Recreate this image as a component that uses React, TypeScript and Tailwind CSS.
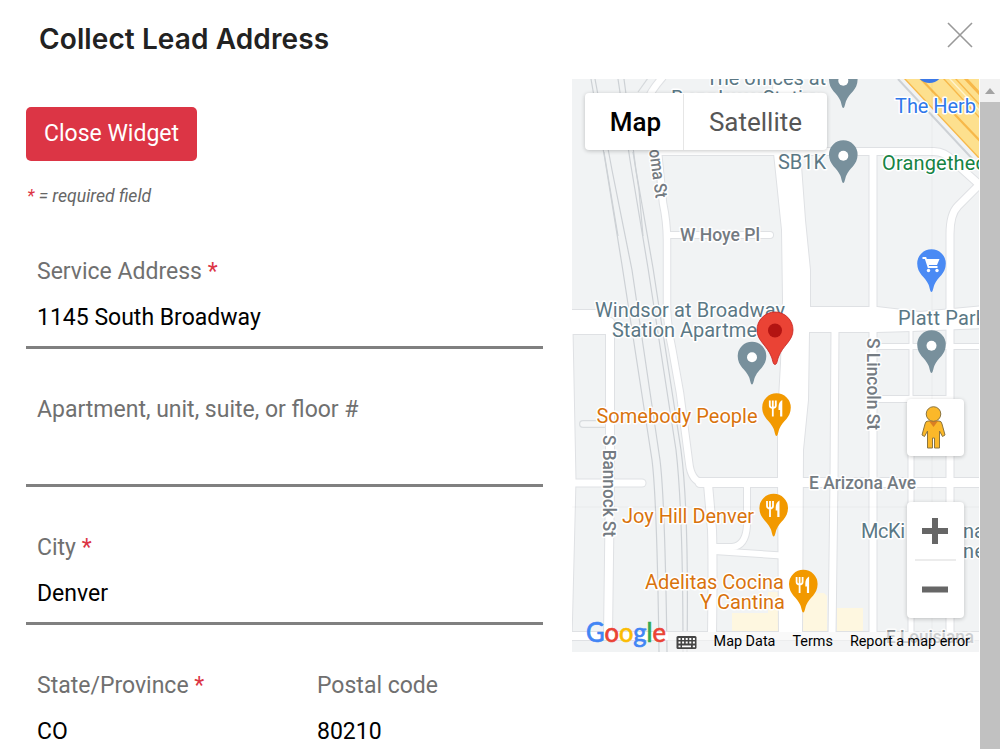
import type { ReactNode } from 'react'

type FieldProps = {
  label: string
  value: string
  required?: boolean
}

type Point = { x: number; y: number }

type PoiLabelProps = Point & {
  children: string
  color: string
  width: number
}

const GRAY = '#78909c'
const ORANGE = '#f29900'
const GRAY_TEXT = '#5b7885'
const ORANGE_TEXT = '#d9730d'

const roads: Array<{ d: string; width: number }> = [
  { d: 'M667 70 L662 78 Q650 92 648 100 L658 152 L663 203 Q667 222 667 240 V310 Q668 330 672 348 L680 393 L689 462 Q691 482 704 483', width: 6.5 },
  { d: 'M658 151.5 H934 Q945 152 952 160 L982 187', width: 7 },
  { d: 'M979 185 L958 206 Q950 214 950 234 V640', width: 7 },
  { d: 'M667 235 H770', width: 6 },
  { d: 'M566 322 H608', width: 24 },
  { d: 'M610 322 V480 L608 636', width: 8 },
  { d: 'M566 483 H642', width: 7 },
  { d: 'M700 482.5 H985', width: 9 },
  { d: 'M566 636 H985', width: 8 },
  { d: 'M708 484 L712 530 Q713 560 712 636', width: 8 },
  { d: 'M747 484 V525 Q746 546 732 547 L714 547', width: 6 },
  { d: 'M714 551 L782 555.5', width: 6 },
  { d: 'M873 153 V636', width: 7 },
  { d: 'M835 328 L834 480 L832 636', width: 7 },
  { d: 'M911 328 V398', width: 3 },
  { d: 'M911 398 V636', width: 5 },
  { d: 'M873 346.5 H985', width: 5 },
  { d: 'M873 399 H950', width: 6 },
  { d: 'M569 330 L572 480 L568 640', width: 7 },
]

const broadway =
  'M773 70 L774 153 L782 230 L783 300 L781 363 L778 417 V477 L779 636 H802 L803 450 L808 400 L809 332 H877 L912 331 L985 328 V306 L920 312 L877 307 H810 V270 L805 220 L800 152 V70 Z'

const rails = [
  'M591 79 L605 160 L622 265 L652 460 Q657 500 659 652',
  'M595 79 L612 170 L632 270 L660 460 Q665 500 667 652',
  'M618 79 L630 160 L648 268 L676 450 Q683 510 683 652',
  'M624 79 L636 170 L653 268 L681 450 Q689 510 687 652',
  'M604 152 L612 200 L618 236',
  'M633 152 L639 190 L643 236',
]

const googleLetters = [
  { letter: 'G', color: '#4285f4' },
  { letter: 'o', color: '#ea4335' },
  { letter: 'o', color: '#fbbc04' },
  { letter: 'g', color: '#4285f4' },
  { letter: 'l', color: '#34a853' },
  { letter: 'e', color: '#ea4335' },
]

const userFields = {
  address: '1145 South Broadway',
  unit: '',
  city: 'Denver',
  state: 'CO',
  postalCode: '80210',
}

export default function App() {
  return (
    <main className="flex h-[749px] w-[1000px] flex-col overflow-hidden bg-white font-['Roboto',sans-serif]">
      <header className="flex h-[79px] shrink-0 items-start justify-between pt-[22px] pr-[26px] pl-[39px]">
        <h1 className="pt-px font-['Inter',sans-serif] text-[28px] leading-8 font-semibold tracking-[0.1px] text-[#222]">
          Collect Lead Address
        </h1>
        <button type="button" aria-label="Close">
          <svg width="28" height="28" viewBox="0 0 28 28" stroke="#999" strokeWidth="1.6">
            <path d="M2 1 L26 25 M26 1 L2 25" />
          </svg>
        </button>
      </header>

      <div className="flex min-h-0 flex-1">
        <LeadForm />
        <LeadMap />
        <Scrollbar />
      </div>
    </main>
  )
}

function LeadForm() {
  return (
    <form className="w-[572px] shrink-0 pt-7 pr-[29px] pl-[26px]">
      <button
        type="button"
        className="flex h-[54px] w-[171px] items-center justify-center rounded-[5px] bg-[#dc3545] pt-px text-[23px] text-white"
      >
        Close Widget
      </button>
      <p className="mt-[23px] pl-px text-[17.6px] leading-6 text-[#666] italic">
        <span className="text-[#dc3545]">*</span> = required field
      </p>
      <div className="mt-[50px] grid gap-[47px]">
        <Field label="Service Address" value={userFields.address} required />
        <Field label="Apartment, unit, suite, or floor #" value={userFields.unit} />
        <Field label="City" value={userFields.city} required />
        <div className="grid grid-cols-[251px_237px] gap-[29px]">
          <Field label="State/Province" value={userFields.state} required />
          <Field label="Postal code" value={userFields.postalCode} />
        </div>
      </div>
    </form>
  )
}

function Field({ label, value, required }: FieldProps) {
  return (
    <label className="flex h-[91px] flex-col border-b-3 border-[#808080] px-[11px]">
      <span className="text-[23px] leading-7 text-[#707070]">
        {label} {required && <span className="text-[#dc3545]">*</span>}
      </span>
      <input
        className="mt-4 h-8 w-full bg-transparent text-[23px] text-black outline-none"
        defaultValue={value}
      />
    </label>
  )
}

function LeadMap() {
  return (
    <section className="relative h-[573px] w-[407px] shrink-0 overflow-hidden bg-[#f1f3f4]">
      <MapCanvas />
      <div className="absolute top-[14px] left-[13px] flex h-[57px] w-[242px] rounded-sm bg-white pt-px text-[26px] shadow-[0_1px_4px_rgba(0,0,0,0.22)]">
        <button type="button" className="w-[99px] border-r border-[#e6e6e6] pl-[3px] font-medium text-black">
          Map
        </button>
        <button type="button" className="flex-1 text-[#565656]">
          Satellite
        </button>
      </div>

      <MapControl className="top-[320px] h-[57px]">
        <Pegman />
      </MapControl>
      <MapControl className="top-[423px] h-[116px]">
        <svg width="57" height="116" viewBox="0 0 57 116">
          <path d="M15 29 H41 M28 16 V42 M15 87.500 H41" stroke="#666" strokeWidth="6" />
          <path d="M8 58 H49" stroke="#e6e6e6" strokeWidth="1.5" />
        </svg>
      </MapControl>

      <div className="absolute right-0 bottom-0 flex h-5 items-center gap-[17px] bg-[#f5f5f5]/60 pr-[9px] pl-2 text-[14.4px] leading-5 whitespace-nowrap text-black">
        <span className="flex items-center gap-[17px]">
          <KeyboardIcon />
          <span>Map Data</span>
        </span>
        <span>Terms</span>
        <span>Report a map error</span>
      </div>
    </section>
  )
}

function MapControl({ className, children }: { className: string; children: ReactNode }) {
  return (
    <button
      type="button"
      className={`absolute left-[334.5px] flex w-[57px] items-center justify-center rounded-sm bg-white shadow-[0_1px_4px_rgba(0,0,0,0.22)] ${className}`}
    >
      {children}
    </button>
  )
}

function MapCanvas() {
  return (
    <svg width="407" height="573" viewBox="572 79 407 573" fill="none">
      <g fill="#fef7e0">
        <path d="M732 613 H768 V592 H779 V633 H732 Z" />
        <path d="M802 593 H824 L827 596 V632 H802 Z" />
        <path d="M837 608 H863 V632 H837 Z" />
      </g>

      <g stroke="#cdd1d5" strokeWidth="1.2">
        {rails.map((d) => (
          <path key={d} d={d} />
        ))}
      </g>
      <path d="M638 92 L648 78" stroke="#d5d8db" strokeWidth="1.2" />
      <path d="M583 424 H606" stroke="#d9dcdf" strokeWidth="8" strokeLinecap="round" />
      <path d="M583 424 H606" stroke="#f5f6f7" strokeWidth="5.500" strokeLinecap="round" />

      {/* casings first so that the crossings stay open */}
      <g stroke="#dfe1e4" strokeLinecap="round">
        {roads.map((road) => (
          <path key={road.d} d={road.d} strokeWidth={road.width + 2} strokeLinecap={road.width > 20 ? 'butt' : 'round'} />
        ))}
        <path d={broadway} strokeWidth="2" />
      </g>
      <g stroke="#fff" strokeLinecap="round">
        {roads.map((road) => (
          <path key={road.d} d={road.d} strokeWidth={road.width} strokeLinecap={road.width > 20 ? 'butt' : 'round'} />
        ))}
        <path d={broadway} fill="#fff" stroke="none" />
      </g>

      <path d="M898 79 L979 166" stroke="#cdd1d5" strokeWidth="2" />
      <path d="M904 78 L980 159 V78 Z" fill="#fde08e" />
      <g stroke="#f7b84a" strokeWidth="1.4">
        <path d="M904 78 L980 159" />
        <path d="M920 78 L980 141" strokeWidth="2.200" />
        <path d="M943 78 L980 118" />
        <path d="M949 78 L980 111" stroke="#fff3cf" />
        <path d="M955 78 L980 105" />
        <path d="M965 78 L980 94" strokeWidth="3" />
      </g>

      <path d="M932 79 V632 M572 507 H979" stroke="#000" strokeOpacity="0.03" />

      <StreetLabel x={680} y={241} width={80}>W Hoye Pl</StreetLabel>
      <StreetLabel x={809} y={488.500} width={107}>E Arizona Ave</StreetLabel>
      <g transform="translate(649 150) rotate(82)">
        <StreetLabel x={0} y={0} width={49}>oma St</StreetLabel>
      </g>
      <g transform="translate(867 338) rotate(90)">
        <StreetLabel x={0} y={0} width={92}>S Lincoln St</StreetLabel>
      </g>
      <g transform="translate(603 435) rotate(90)">
        <StreetLabel x={0} y={0} width={102}>S Bannock St</StreetLabel>
      </g>
      <g opacity="0.8">
        <StreetLabel x={886} y={642.500} width={88}>E Louisiana</StreetLabel>
      </g>

      <PoiLabel x={706} y={84.500} width={120} color={GRAY_TEXT}>The offices at</PoiLabel>
      <PoiLabel x={671} y={104.500} width={154} color={GRAY_TEXT}>Broadway Station</PoiLabel>
      <PoiLabel x={778} y={169} width={48} color={GRAY_TEXT}>SB1K</PoiLabel>
      <PoiLabel x={895} y={112.500} width={81} color="#2f78ea">The Herb</PoiLabel>
      <PoiLabel x={882} y={170} width={104} color="#168344">Orangethec</PoiLabel>
      <PoiLabel x={595} y={317} width={190} color={GRAY_TEXT}>Windsor at Broadway</PoiLabel>
      <PoiLabel x={612} y={336.500} width={145} color={GRAY_TEXT}>Station Apartme</PoiLabel>
      <PoiLabel x={898} y={325} width={88} color={GRAY_TEXT}>Platt Park</PoiLabel>
      <PoiLabel x={596.500} y={422.500} width={161} color={ORANGE_TEXT}>Somebody People</PoiLabel>
      <PoiLabel x={622} y={523} width={132} color={ORANGE_TEXT}>Joy Hill Denver</PoiLabel>
      <PoiLabel x={645} y={589} width={139} color={ORANGE_TEXT}>Adelitas Cocina</PoiLabel>
      <PoiLabel x={700} y={609} width={85} color={ORANGE_TEXT}>Y Cantina</PoiLabel>
      <PoiLabel x={861} y={537.500} width={44} color={GRAY_TEXT}>McKi</PoiLabel>
      <PoiLabel x={963} y={537.500} width={22} color={GRAY_TEXT}>na</PoiLabel>
      <PoiLabel x={963} y={557.500} width={22} color={GRAY_TEXT}>ne</PoiLabel>

      <Pin x={843.300} y={80} color={GRAY} />
      <Pin x={843.300} y={155} color={GRAY} />
      <Pin x={931.500} y={345} color={GRAY} />
      <Pin x={752} y={356.500} color={GRAY} />
      <circle cx="929.500" cy="69" r="14" fill="#3b78e7" />
      <Pin x={931.500} y={264} color="#4a8af4">
        <path d="M-9 -6 H-6 L-3 3 H6" stroke="#fff" strokeWidth="1.8" />
        <path d="M-5.500 -5 H8 L5.500 1 H-3.500 Z" fill="#fff" />
        <circle cx="-3" cy="6.500" r="1.700" fill="#fff" />
        <circle cx="5.500" cy="6.500" r="1.700" fill="#fff" />
      </Pin>
      <FoodPin x={776.500} y={408} />
      <FoodPin x={773.700} y={508.500} />
      <FoodPin x={803.300} y={584.500} />

      <path
        d="M775 364.500 C773 364.500 773 361 771.500 357 C767 345 757 341 757 330 A18 18 0 0 1 793 330 C793 341 783 345 778.500 357 C777 361 777 364.500 775 364.500 Z"
        fill="#ea4335"
        stroke="#c5221f"
        strokeWidth="0.8"
      />
      <circle cx="775" cy="330.500" r="7" fill="#b31412" />

      <text
        x="586"
        y="641.500"
        textLength="80"
        lengthAdjust="spacingAndGlyphs"
        className="font-['Lato',sans-serif] text-[26px]"
      >
        {googleLetters.map(({ letter, color }, index) => (
          <tspan key={index} fill={color} stroke={color} strokeWidth="0.7">
            {letter}
          </tspan>
        ))}
      </text>
    </svg>
  )
}

function PoiLabel({ x, y, width, color, children }: PoiLabelProps) {
  return (
    <text
      x={x}
      y={y}
      textLength={width}
      fill={color}
      stroke="#fff"
      strokeWidth="3"
      strokeLinejoin="round"
      paintOrder="stroke"
      className="text-[20px]"
    >
      {children}
    </text>
  )
}

function StreetLabel({ x, y, width, children }: Point & { width: number; children: string }) {
  return (
    <text
      x={x}
      y={y}
      textLength={width}
      lengthAdjust="spacingAndGlyphs"
      fill="#747b82"
      stroke="#fff"
      strokeWidth="3"
      strokeLinejoin="round"
      paintOrder="stroke"
      className="text-[17.5px] font-medium"
    >
      {children}
    </text>
  )
}

function Pin({ x, y, color, children }: Point & { color: string; children?: ReactNode }) {
  return (
    <g transform={`translate(${x} ${y})`}>
      <path
        d="M0 28 C-1.500 28 -1.500 24 -3 20.500 C-6 13 -14.300 10 -14.300 -0.500 A14.300 14.300 0 0 1 14.300 -0.500 C14.300 10 6 13 3 20.500 C1.500 24 1.500 28 0 28 Z"
        fill={color}
      />
      {children ?? <circle cy="0.800" r="5" fill="#fff" />}
    </g>
  )
}

function FoodPin({ x, y }: Point) {
  return (
    <Pin x={x} y={y} color={ORANGE}>
      <path
        d="M-6.700 -7.500 V-2.500 Q-6.700 0 -3.700 0 Q-0.700 0 -0.700 -2.500 V-7.500 M-3.700 -7.500 V8.500"
        stroke="#fff"
        strokeWidth="1.800"
      />
      <path d="M5.800 -8 Q2 -6 2 -1 V2 H3.600 V8.500 H5.800 Z" fill="#fff" />
    </Pin>
  )
}

function Pegman() {
  return (
    <svg width="25" height="43" viewBox="0 0 25 43" stroke="#8a7440" strokeWidth="1" className="mr-[3px]">
      <path
        d="M7 15 H18 Q20.500 15 21 18 L24 29 L21.500 30.500 L18.500 25 V42 H13.500 V32 H11.500 V42 H6.500 V25 L3.500 30.500 L1 29 L4 18 Q4.500 15 7 15 Z"
        fill="#fbb829"
      />
      <path d="M8 15 H17 L12.500 21 Z" fill="#db7f22" stroke="none" />
      <circle cx="12.500" cy="8" r="7.300" fill="#fbb829" />
    </svg>
  )
}

function KeyboardIcon() {
  return (
    <svg width="21" height="15" viewBox="0 0 21 15">
      <rect x="0.500" y="1" width="20" height="13" rx="1.500" fill="#444" />
      <path d="M2.500 4 H19 M2.500 7.500 H19" stroke="#fff" strokeWidth="2" strokeDasharray="2 1.600" />
      <path d="M2.500 11.300 H4.500 M6 11.300 H15 M16.800 11.300 H19" stroke="#fff" strokeWidth="1.800" />
    </svg>
  )
}

function Scrollbar() {
  return (
    <div className="ml-px flex w-5 flex-col bg-[#c1c1c1]">
      <div className="flex h-[23px] items-center justify-center bg-[#f1f1f1]">
        <svg width="10" height="6" viewBox="0 0 10 6" fill="#a3a3a3">
          <path d="M5 0 L10 6 H0 Z" />
        </svg>
      </div>
    </div>
  )
}
